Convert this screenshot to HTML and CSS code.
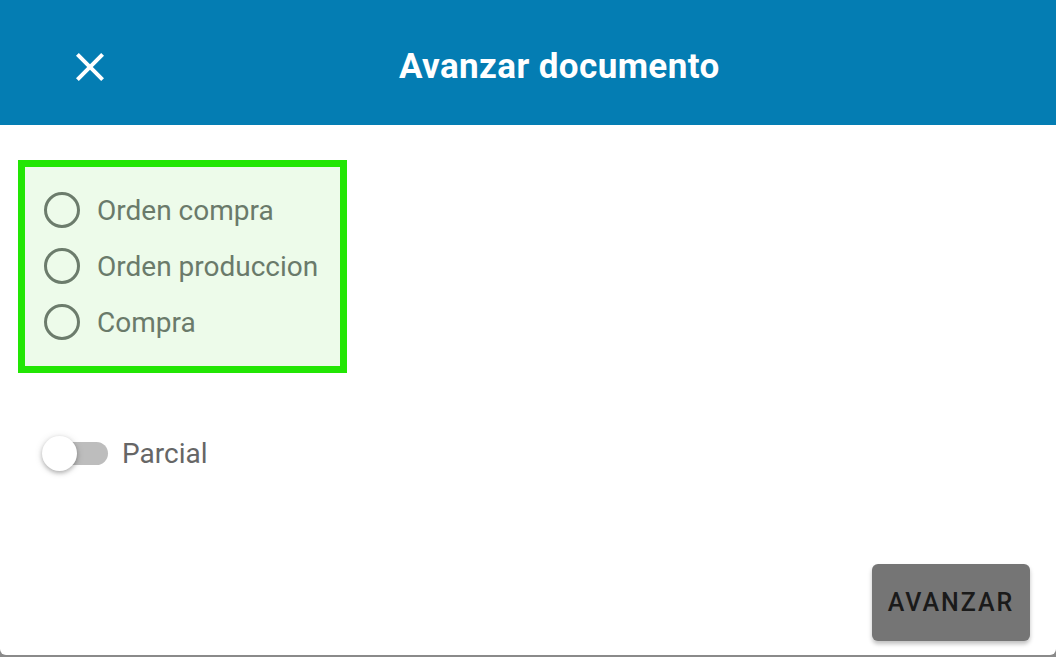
FILE: index.html
```html
<!DOCTYPE html>
<html>
<head>
    <meta charset="utf-8" />
    <title>Avanzar documento</title>
    <link rel="stylesheet" href="styles.css">
</head>
<body>
    <div class="dialog">
        <!-- cabecera -->
        <div class="header">
            <button class="close" type="button">
                <svg viewBox="0 0 24 24" width="48" height="48"><path d="M19 6.41 17.59 5 12 10.59 6.41 5 5 6.41 10.59 12 5 17.59 6.41 19 12 13.41 17.59 19 19 17.59 13.41 12z" fill="#fff"/></svg>
            </button>
            <h1 class="title">Avanzar documento</h1>
        </div>
        <!-- contenido -->
        <div class="content">
            <div class="radio-group">
                <label class="radio"><span class="circle"></span>Orden compra</label>
                <label class="radio"><span class="circle"></span>Orden produccion</label>
                <label class="radio"><span class="circle"></span>Compra</label>
            </div>
            <label class="switch">
                <span class="track"><span class="thumb"></span></span>
                Parcial
            </label>
        </div>
        <!-- acciones -->
        <div class="actions">
            <button class="btn" type="button">AVANZAR</button>
        </div>
    </div>
</body>
</html>
```

FILE: styles.css
```css
/*清除边距*/
html, body{
    margin: 0;
    padding: 0;
}
body{
    background-color: #8a8a8a;
    font-family: Roboto, "Liberation Sans", sans-serif;
    height: 657px;
    overflow: hidden;
}
/*对话框*/
.dialog{
    height: 655px;
    background-color: #fff;
    border-radius: 0 0 6px 6px;
    display: flex;
    flex-direction: column;
}
/*标题栏*/
.header{
    height: 125px;
    box-sizing: border-box;
    padding-top: 8px;
    background-color: #047db3;
    display: flex;
    align-items: center;
    flex-shrink: 0;
}
.close{
    width: 48px;
    height: 48px;
    margin-left: 66px;
    padding: 0;
    border: none;
    background: none;
    display: flex;
}
.title{
    margin: 0 0 0 285px;
    color: #fff;
    font-size: 35px;
    font-weight: 700;
    letter-spacing: 0.4px;
}
/*内容*/
.content{
    flex: 1;
    padding: 35px 0 0 18px;
}
.radio-group{
    width: fit-content;
    border: 7px solid #22e604;
    background-color: #edfbea;
    padding: 15px 22px 16px 19px;
}
.radio{
    height: 56px;
    display: flex;
    align-items: center;
    gap: 17px;
    font-size: 28px;
    color: #6a7a6a;
}
.circle{
    width: 30px;
    height: 30px;
    border: 3px solid #6c7c6c;
    border-radius: 50%;
}
/*开关*/
.switch{
    margin: 64px 0 0 24px;
    display: flex;
    align-items: center;
    gap: 14px;
    font-size: 28px;
    color: #666;
}
.track{
    position: relative;
    width: 62px;
    height: 23px;
    margin-left: 4px;
    border-radius: 12px;
    background-color: #bdbdbd;
}
.thumb{
    position: absolute;
    left: -4px;
    top: -6px;
    width: 35px;
    height: 35px;
    border-radius: 50%;
    background-color: #fff;
    box-shadow: 0 2px 4px rgba(0,0,0,0.25), 0 1px 8px rgba(0,0,0,0.12);
}
/*按钮*/
.actions{
    display: flex;
    justify-content: flex-end;
    padding: 0 26px 14px 0;
}
.btn{
    width: 158px;
    height: 77px;
    border: none;
    border-radius: 6px;
    background-color: #757575;
    color: #1a1a1a;
    font-family: Roboto, "Liberation Sans", sans-serif;
    font-size: 25px;
    font-weight: 500;
    letter-spacing: 2px;
    box-shadow: 0 3px 4px rgba(0,0,0,0.25);
}
```
